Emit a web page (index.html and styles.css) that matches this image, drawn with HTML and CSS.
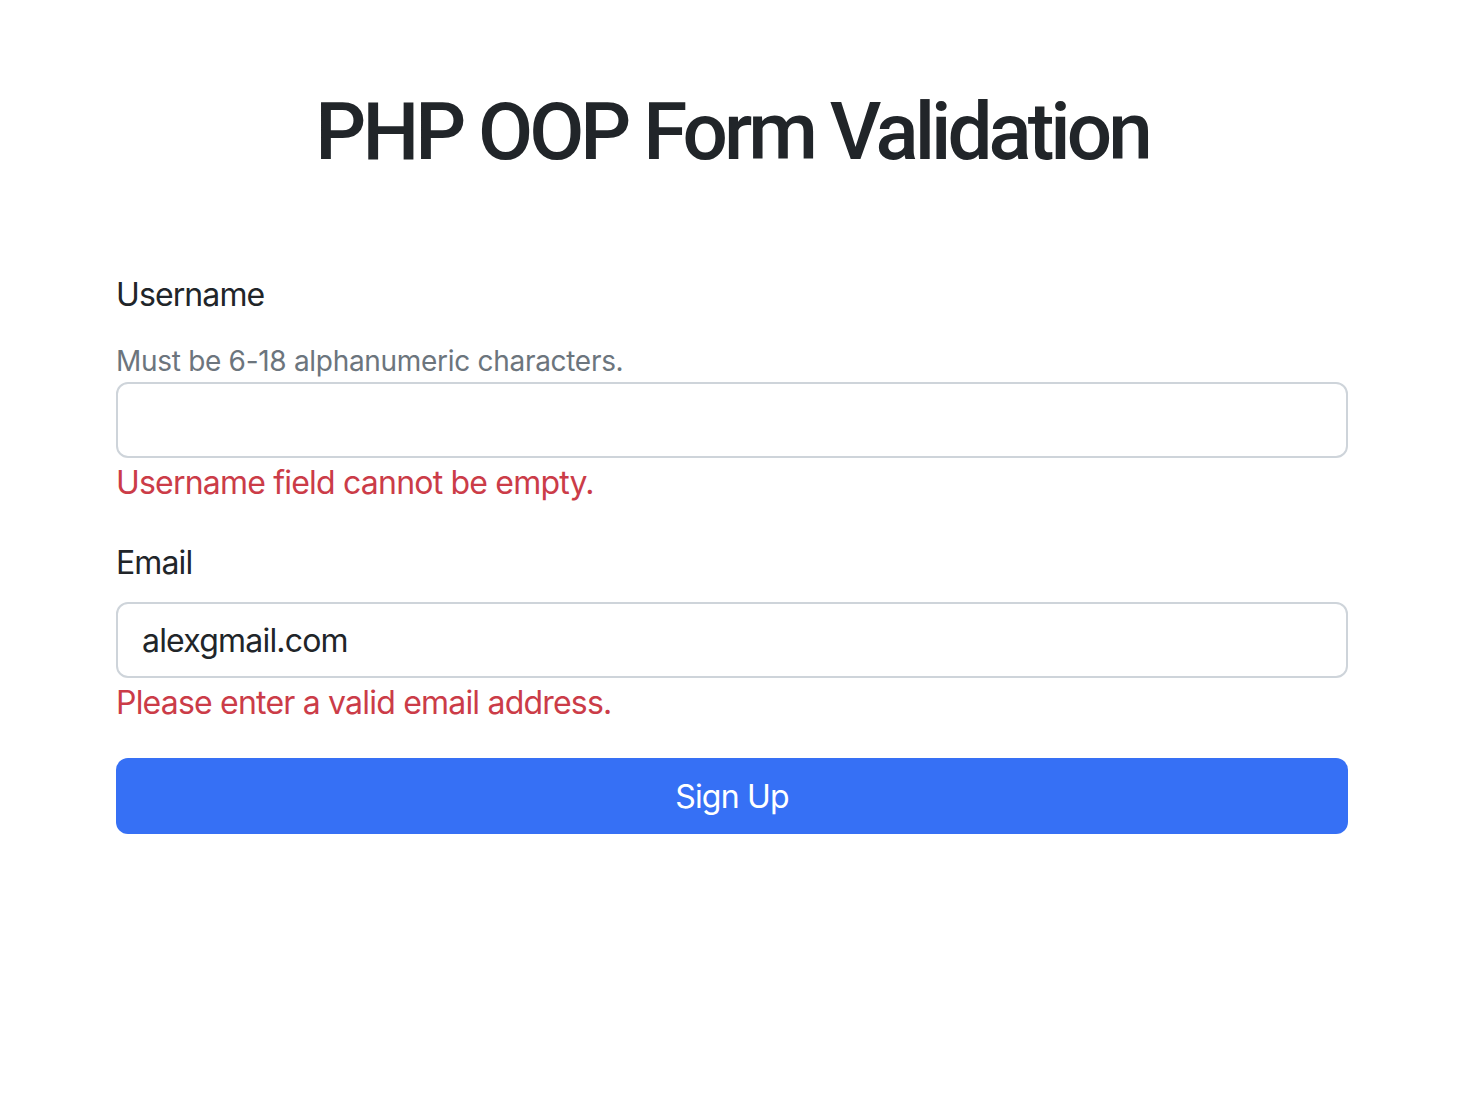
FILE: index.html
```html
<!DOCTYPE html>
<html lang="en">
<head>
<meta charset="utf-8">
<title>PHP OOP Form Validation</title>
<link rel="stylesheet" href="styles.css">
</head>
<body>
<main class="page">
  <h1 class="title">PHP OOP Form Validation</h1>
  <form class="form">
    <div class="field">
      <label class="label" for="username">Username</label>
      <div class="help">Must be 6-18 alphanumeric characters.</div>
      <input class="input" id="username" type="text" value="">
      <div class="error">Username field cannot be empty.</div>
    </div>
    <div class="field">
      <label class="label" for="email">Email</label>
      <input class="input" id="email" type="text" value="alexgmail.com">
      <div class="error">Please enter a valid email address.</div>
    </div>
    <button class="btn" type="button">Sign Up</button>
  </form>
</main>
</body>
</html>
```
FILE: styles.css
```css
* { box-sizing: border-box; }
html, body { margin: 0; padding: 0; background: #fff; }
body {
  font-family: Inter, "Noto Sans", "Liberation Sans", sans-serif;
  color: #212529;
  font-size: 32px;
  line-height: 1.5;
}
.page {
  width: 1232px;
  margin-left: 116px;
  padding-top: 84px;
}
.title {
  margin: 0 0 90px 0;
  font-family: Roboto, Inter, "Liberation Sans", sans-serif;
  font-size: 80px;
  font-weight: 500;
  line-height: 96px;
  letter-spacing: -4px;
  text-align: center;
}
.form { display: flex; flex-direction: column; }
.field { display: flex; flex-direction: column; margin-bottom: 32px; }
.label {
  display: block;
  font-size: 32px;
  line-height: 48px;
  padding-top: 1px;
  margin-bottom: 15px;
  letter-spacing: -0.9px;
}
.help {
  font-size: 28px;
  line-height: 42px;
  padding-top: 6px;
  color: #6c757d;
  letter-spacing: -0.3px;
}
.input {
  display: block;
  width: 100%;
  height: 76px;
  padding: 0 24px;
  font-family: inherit;
  font-size: 32px;
  letter-spacing: -0.8px;
  color: #212529;
  background: #fff;
  border: 2px solid #ced4da;
  border-radius: 12px;
  outline: none;
}
.error {
  font-size: 32px;
  line-height: 46px;
  padding-top: 2px;
  color: #cb3c48;
  letter-spacing: -0.8px;
}
.btn {
  display: block;
  width: 100%;
  height: 76px;
  border: none;
  border-radius: 12px;
  background: #3670f5;
  color: #fff;
  font-family: inherit;
  font-size: 32px;
  line-height: 48px;
  letter-spacing: -0.8px;
  padding-top: 2px;
}
```
